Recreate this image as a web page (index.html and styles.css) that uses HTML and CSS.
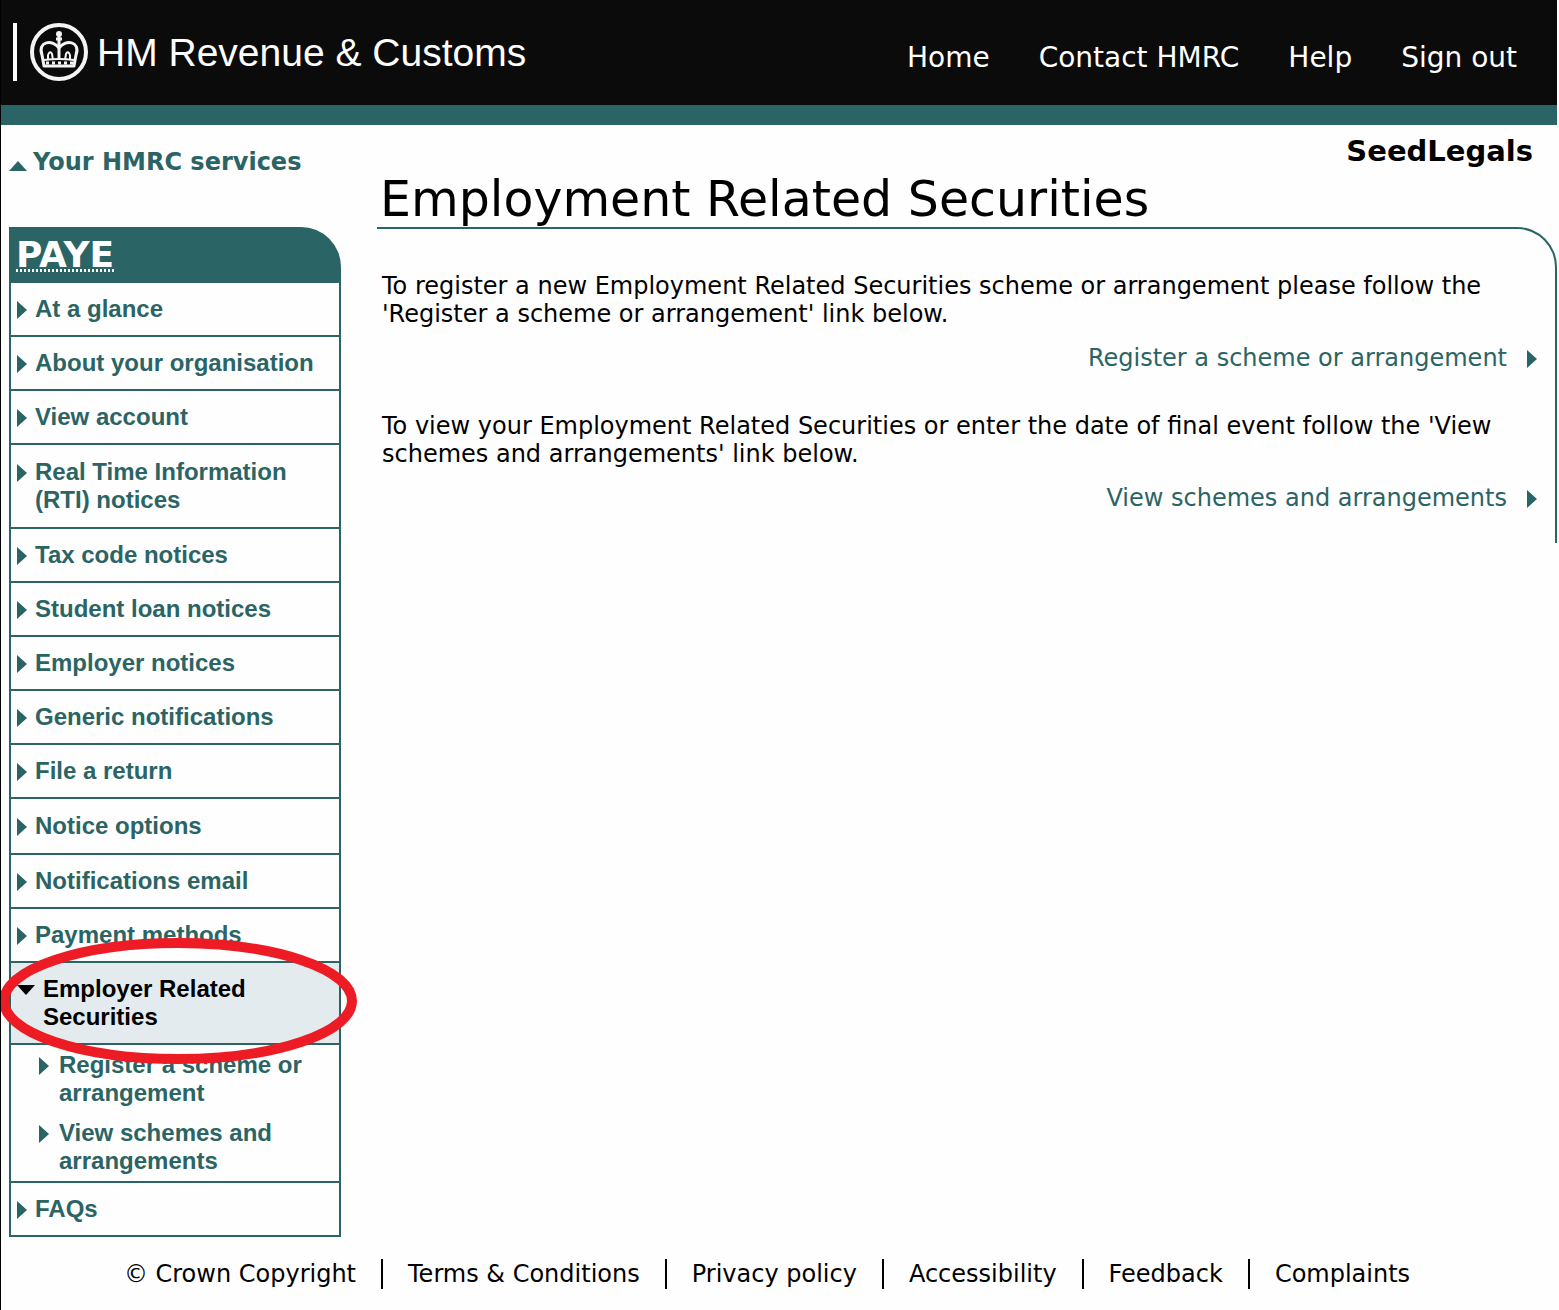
FILE: index.html
```html
<!DOCTYPE html>
<html lang="en">
<head>
<meta charset="utf-8">
<meta name="viewport" content="width=device-width, initial-scale=1">
<title>Employment Related Securities</title>
<link rel="stylesheet" href="styles.css">
</head>
<body>
<header class="masthead">
  <a class="brand" href="#">
    <svg class="brand-crest" viewBox="0 0 80 60" aria-hidden="true">
      <path d="M3 0V58" stroke="#fff" stroke-width="4"/>
      <g fill="none" stroke="#f4f4f4">
        <circle cx="47" cy="29" r="27" stroke-width="4"/>
        <path d="M32 43L30 32C25 18 41 16 47 25C53 16 69 18 64 32L62 43Z" stroke-width="3" stroke-linejoin="round"/>
        <path d="M47 12V37M44 16H50" stroke-width="3"/>
        <path d="M36 37V32Q38 27 40 31L41 37M53 37L54 31Q56 27 58 32V37" stroke-width="2"/>
        <path d="M32 37Q47 35 62 37" stroke-width="2"/>
        <path d="M34 40H61" stroke-width="3" stroke-dasharray="3 3"/>
      </g>
      <circle cx="47" cy="11" r="3" fill="#f4f4f4"/>
    </svg>
    <span class="brand-name">HM Revenue &amp; Customs</span>
  </a>
  <nav class="top-nav" aria-label="Site">
    <a href="#">Home</a>
    <a href="#">Contact HMRC</a>
    <a href="#">Help</a>
    <a href="#">Sign out</a>
  </nav>
</header>
<div class="columns">
  <aside class="sidebar">
    <a class="services-link" href="#">Your HMRC services</a>
    <nav class="menu" aria-label="PAYE">
      <h2 class="menu-title"><abbr title="Pay As You Earn">PAYE</abbr></h2>
      <ul class="menu-list">
        <li><a class="menu-item" href="#">At a glance</a></li>
        <li><a class="menu-item" href="#">About your organisation</a></li>
        <li><a class="menu-item" href="#">View account</a></li>
        <li><a class="menu-item menu-item-roomy" href="#">Real Time Information (RTI) notices</a></li>
        <li><a class="menu-item" href="#">Tax code notices</a></li>
        <li><a class="menu-item" href="#">Student loan notices</a></li>
        <li><a class="menu-item" href="#">Employer notices</a></li>
        <li><a class="menu-item" href="#">Generic notifications</a></li>
        <li><a class="menu-item" href="#">File a return</a></li>
        <li><a class="menu-item menu-item-roomy" href="#">Notice options</a></li>
        <li><a class="menu-item" href="#">Notifications email</a></li>
        <li><a class="menu-item" href="#">Payment methods</a></li>
        <li class="current">
          <a class="menu-item menu-item-current" href="#" aria-current="page">Employer Related Securities</a>
          <svg class="highlight" viewBox="0 0 360 128" aria-hidden="true"><ellipse cx="180" cy="64" rx="174" ry="58" fill="none" stroke="#ed1c24" stroke-width="10"/></svg>
        </li>
        <li>
          <ul class="submenu">
            <li><a class="submenu-item" href="#">Register a scheme or arrangement</a></li>
            <li><a class="submenu-item" href="#">View schemes and arrangements</a></li>
          </ul>
        </li>
        <li><a class="menu-item" href="#">FAQs</a></li>
      </ul>
    </nav>
  </aside>
  <main class="content">
    <p class="account">SeedLegals</p>
    <h1 class="page-title">Employment Related Securities</h1>
    <section class="panel">
      <p>To register a new Employment Related Securities scheme or arrangement please follow the 'Register a scheme or arrangement' link below.</p>
      <a class="action" href="#">Register a scheme or arrangement</a>
      <p>To view your Employment Related Securities or enter the date of final event follow the 'View schemes and arrangements' link below.</p>
      <a class="action" href="#">View schemes and arrangements</a>
    </section>
  </main>
</div>
<footer class="footer">
  <span class="footer-item">© Crown Copyright</span>
  <a class="footer-item" href="#">Terms &amp; Conditions</a>
  <a class="footer-item" href="#">Privacy policy</a>
  <a class="footer-item" href="#">Accessibility</a>
  <a class="footer-item" href="#">Feedback</a>
  <a class="footer-item" href="#">Complaints</a>
</footer>
</body>
</html>
```
FILE: styles.css
```css
:root {
  --teal: #2b6464;
  --verdana: Verdana, "DejaVu Sans", sans-serif;
  --arial: Arial, "Liberation Sans", sans-serif;
}

* {
  box-sizing: border-box;
}

body {
  margin: 0;
  padding-right: 2px;
  border-left: 1px solid #000;
  background: #fefefe;
  color: #000;
  font: 24px/28px var(--verdana);
}

a {
  color: inherit;
  text-decoration: none;
}

h1, h2, p, ul {
  margin: 0;
  padding: 0;
}

ul {
  list-style: none;
}

.masthead {
  display: flex;
  justify-content: space-between;
  align-items: flex-start;
  min-height: 125px;
  padding: 23px 40px 0 11px;
  border-bottom: 20px solid var(--teal);
  background: #0b0b0b;
  color: #fff;
}

.brand {
  display: flex;
  align-items: center;
  gap: 5px;
}

.brand-crest {
  width: 80px;
  height: 60px;
}

.brand-name {
  font: 39px/60px var(--arial);
  white-space: nowrap;
}

.top-nav {
  display: flex;
  gap: 49px;
  padding-top: 19px;
  font-size: 28px;
  line-height: 32px;
  white-space: nowrap;
}

.columns {
  display: flex;
  align-items: flex-start;
  gap: 36px;
  padding-left: 8px;
}

.sidebar {
  flex: 0 0 332px;
  padding-top: 23px;
  color: var(--teal);
}

.services-link {
  display: flex;
  align-items: center;
  gap: 6px;
  margin-bottom: 51px;
  font-weight: bold;
  white-space: nowrap;
}

.services-link::before {
  content: "";
  width: 18px;
  height: 10px;
  margin-top: 8px;
  background: var(--teal);
  clip-path: polygon(50% 0, 100% 100%, 0 100%);
}

.menu {
  font: bold 24px/28px var(--arial);
}

.menu-title {
  display: flex;
  padding: 11px 7px;
  border-top-right-radius: 40px;
  background: var(--teal);
  color: #fff;
  font: bold 36px/34px var(--verdana);
}

.menu-title abbr {
  text-decoration: none;
  background: repeating-linear-gradient(90deg, #fff 0 2px, transparent 2px 4px) bottom / 100% 3px no-repeat;
}

.menu-list {
  border: solid var(--teal);
  border-width: 0 2px 2px;
}

.menu-list > li + li {
  border-top: 2px solid var(--teal);
}

.menu-item,
.submenu-item {
  display: grid;
  grid-template-columns: 10px 1fr;
  align-items: start;
  gap: 8px;
  padding: 12px 6px;
}

.menu-item-roomy {
  padding-block: 13px;
}

.menu-item::before,
.submenu-item::before,
.action::after {
  content: "";
  width: 10px;
  height: 18px;
  margin-top: 6px;
  background: var(--teal);
  clip-path: polygon(0 0, 100% 50%, 0 100%);
}

.current {
  position: relative;
}

.menu-item-current {
  grid-template-columns: 18px 1fr;
  padding-right: 60px;
  background: #e3ebee;
  color: #000;
}

.menu-item-current::before {
  width: 18px;
  height: 10px;
  margin-top: 10px;
  background: #000;
  clip-path: polygon(0 0, 100% 0, 50% 100%);
}

.highlight {
  position: absolute;
  top: -26px;
  left: -13px;
  width: 360px;
  height: 128px;
  pointer-events: none;
}

.submenu {
  display: grid;
  gap: 12px;
  padding: 6px 20px 6px 28px;
}

.submenu-item {
  gap: 10px;
  padding: 0;
}

.content {
  flex: 1;
  min-width: 0;
}

.account {
  padding: 10px 24px 0 0;
  font-size: 29px;
  line-height: 32px;
  font-weight: bold;
  text-align: right;
}

.page-title {
  padding: 6px 0 0 3px;
  font-size: 49px;
  line-height: 54px;
  font-weight: normal;
}

.panel {
  padding: 43px 18px 31px 5px;
  border: solid var(--teal);
  border-width: 2px 2px 0 0;
  border-top-right-radius: 40px;
}

.action {
  display: flex;
  justify-content: flex-end;
  gap: 20px;
  margin-top: 16px;
  color: var(--teal);
}

.action + p {
  margin-top: 40px;
}

.footer {
  display: flex;
  flex-wrap: wrap;
  justify-content: center;
  padding: 22px 48px 21px 24px;
}

.footer-item {
  padding: 0 25px;
  line-height: 30px;
}

.footer-item + .footer-item {
  border-left: 2px solid #000;
}
```
